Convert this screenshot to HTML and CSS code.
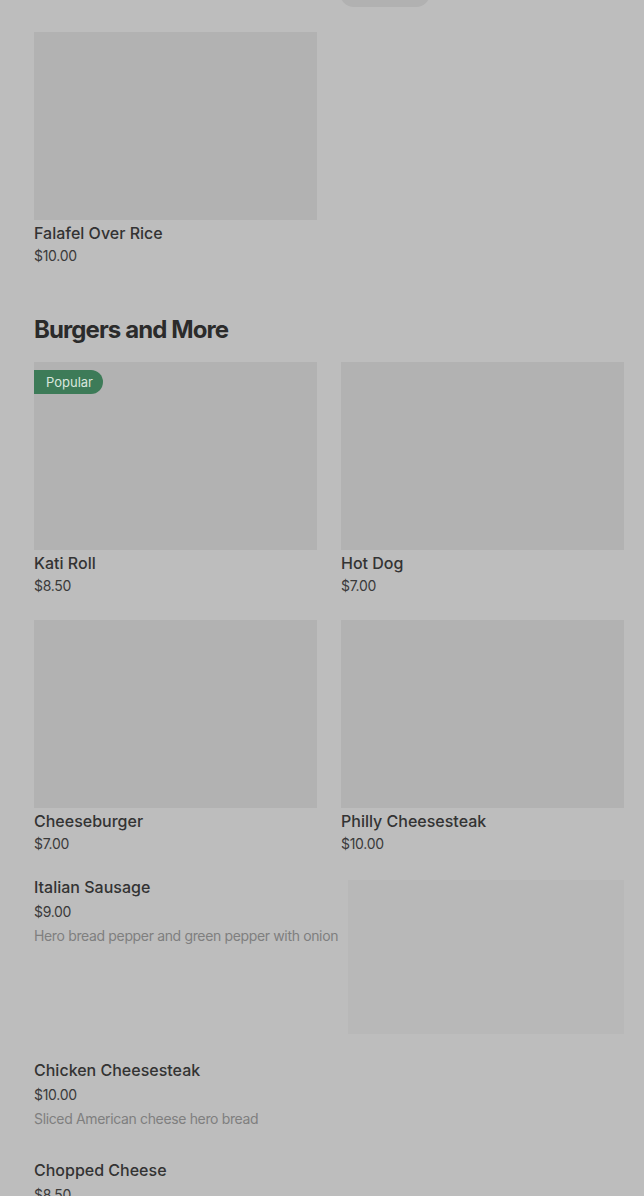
FILE: index.html
```html
<!DOCTYPE html>
<html lang="en">
<head>
    <meta charset="UTF-8">
    <meta name="viewport" content="width=device-width, initial-scale=1.0">
    <title>Menu</title>
    <link rel="stylesheet" href="styles.css">
</head>
<body>
    <div class="overlay">
        <div class="top-strip">
            <span class="chip">
                <svg width="14" height="14" viewBox="0 0 14 14"><rect x="2" y="2" width="10" height="10" rx="1" fill="none" stroke="#444" stroke-width="1.5"/></svg>
                <span>Deals</span>
            </span>
        </div>

        <div class="grid">
            <div class="card">
                <div class="photo"></div>
                <div class="name">Falafel Over Rice</div>
                <div class="price">$10.00</div>
            </div>
        </div>

        <h2 class="section-title">Burgers and More</h2>

        <div class="grid">
            <div class="card">
                <div class="photo">
                    <span class="badge">Popular</span>
                </div>
                <div class="name">Kati Roll</div>
                <div class="price">$8.50</div>
            </div>
            <div class="card">
                <div class="photo"></div>
                <div class="name">Hot Dog</div>
                <div class="price">$7.00</div>
            </div>
            <div class="card">
                <div class="photo"></div>
                <div class="name">Cheeseburger</div>
                <div class="price">$7.00</div>
            </div>
            <div class="card">
                <div class="photo"></div>
                <div class="name">Philly Cheesesteak</div>
                <div class="price">$10.00</div>
            </div>
        </div>

        <div class="list">
            <div class="row">
                <div class="info">
                    <div class="name">Italian Sausage</div>
                    <div class="price">$9.00</div>
                    <div class="desc">Hero bread pepper and green pepper with onion</div>
                </div>
                <div class="thumb"></div>
            </div>
            <div class="row">
                <div class="info">
                    <div class="name">Chicken Cheesesteak</div>
                    <div class="price">$10.00</div>
                    <div class="desc">Sliced American cheese hero bread</div>
                </div>
            </div>
            <div class="row">
                <div class="info">
                    <div class="name">Chopped Cheese</div>
                    <div class="price">$8.50</div>
                </div>
            </div>
        </div>
    </div>
</body>
</html>
```

FILE: styles.css
```css
body {
    margin: 0;
    font-family: Inter, "Liberation Sans", sans-serif;
    background-color: #bdbdbd;
    color: #333;
    overflow: hidden;
}
.overlay {
    padding: 0 20px 40px 34px;
}
.top-strip {
    display: flex;
    align-items: flex-start;
    height: 32px;
    padding-left: 306px;
}
.chip {
    display: flex;
    align-items: center;
    gap: 18px;
    margin-top: -21px;
    height: 28px;
    padding: 0 14px 0 10px;
    border-radius: 14px;
    background: #b1b1b1;
    font-size: 13px;
    color: #444;
}
.grid {
    display: grid;
    grid-template-columns: 1fr 1fr;
    column-gap: 24px;
    row-gap: 24px;
}
.photo {
    position: relative;
    height: 188px;
    background: #b2b2b2;
}
.badge {
    position: absolute;
    left: 0;
    top: 8px;
    height: 24px;
    line-height: 24px;
    padding: 0 10px 0 12px;
    border-radius: 0 12px 12px 0;
    background: #3d7b58;
    color: #d9e7de;
    font-size: 13px;
}
.name {
    margin-top: 3px;
    font-size: 16px;
    line-height: 20px;
    font-weight: 500;
    color: #333;
}
.price {
    font-size: 14px;
    line-height: 20px;
    margin-top: 3px;
    color: #3a3a3a;
    letter-spacing: -0.3px;
}
.section-title {
    margin: 48px 0 16px;
    font-size: 24px;
    line-height: 32px;
    font-weight: 700;
    letter-spacing: -0.9px;
    color: #2b2b2b;
}
.list {
    margin-top: 20px;
}
.row {
    display: flex;
    margin-bottom: 23px;
}
.row .name {
    margin-top: 3px;
}
.row .price {
    margin-top: 5px;
}
.info {
    flex: 1;
    min-width: 0;
    padding-bottom: 5px;
}
.desc {
    margin-top: 4px;
    font-size: 14px;
    line-height: 20px;
    color: #7f7f7f;
    letter-spacing: -0.35px;
    white-space: nowrap;
}
.thumb {
    flex-shrink: 0;
    width: 276px;
    height: 154px;
    margin-top: 6px;
    background: #b8b8b8;
}
```
